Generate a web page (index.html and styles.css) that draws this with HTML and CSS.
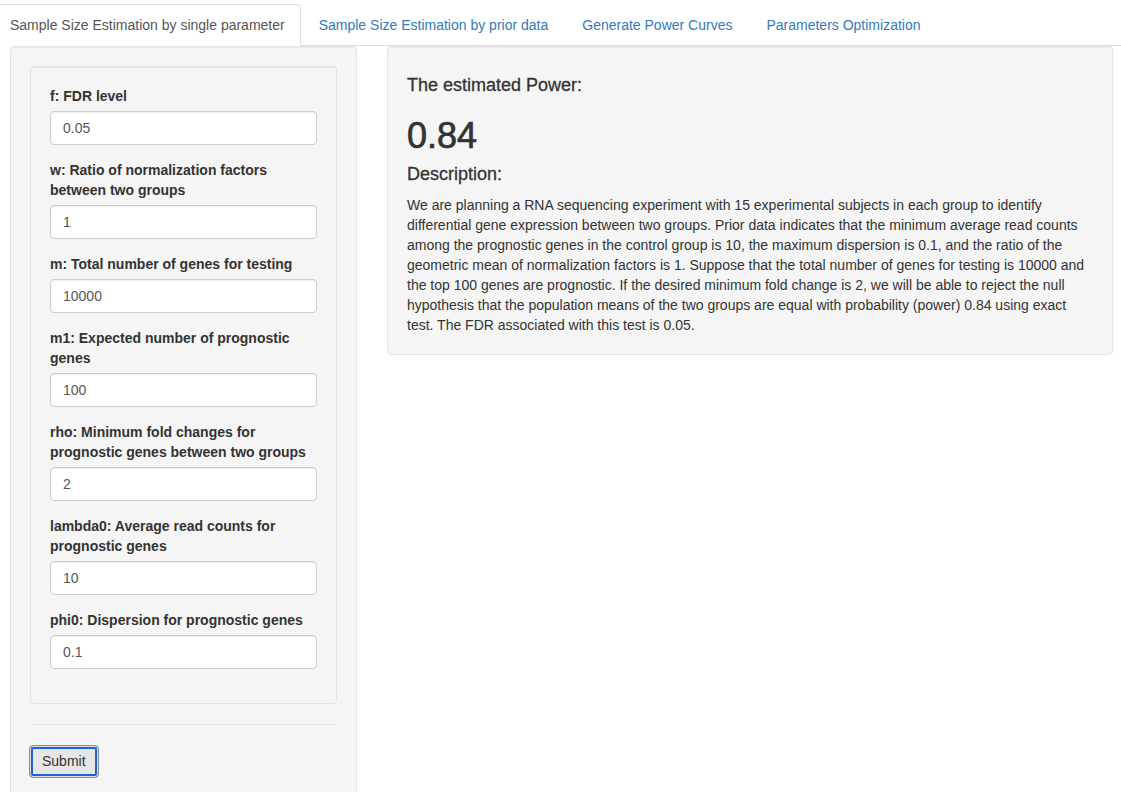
FILE: index.html
```html
<!DOCTYPE html>
<html lang="en">
<head>
<meta charset="utf-8">
<title>Sample Size Estimation</title>
<link rel="stylesheet" href="styles.css">
</head>
<body>
<ul class="nav-tabs">
  <li class="tab active"><a href="#">Sample Size Estimation by single parameter</a></li>
  <li class="tab"><a href="#">Sample Size Estimation by prior data</a></li>
  <li class="tab"><a href="#">Generate Power Curves</a></li>
  <li class="tab"><a href="#">Parameters Optimization</a></li>
</ul>
<div class="row">
  <div class="sidebar">
    <div class="well outer">
      <div class="well inner">
        <div class="form-group">
          <label class="ctl-label">f: FDR level</label>
          <input class="form-control" type="text" value="0.05">
        </div>
        <div class="form-group">
          <label class="ctl-label">w: Ratio of normalization factors between two groups</label>
          <input class="form-control" type="text" value="1">
        </div>
        <div class="form-group">
          <label class="ctl-label">m: Total number of genes for testing</label>
          <input class="form-control" type="text" value="10000">
        </div>
        <div class="form-group">
          <label class="ctl-label">m1: Expected number of prognostic genes</label>
          <input class="form-control" type="text" value="100">
        </div>
        <div class="form-group">
          <label class="ctl-label">rho: Minimum fold changes for prognostic genes between two groups</label>
          <input class="form-control" type="text" value="2">
        </div>
        <div class="form-group">
          <label class="ctl-label">lambda0: Average read counts for prognostic genes</label>
          <input class="form-control" type="text" value="10">
        </div>
        <div class="form-group">
          <label class="ctl-label">phi0: Dispersion for prognostic genes</label>
          <input class="form-control" type="text" value="0.1">
        </div>
      </div>
      <hr class="divider">
      <button class="btn-submit" type="button">Submit</button>
    </div>
  </div>
  <div class="main">
    <div class="well result">
      <h4 class="title">The estimated Power:</h4>
      <h1 class="value">0.84</h1>
      <h4 class="title">Description:</h4>
      <div class="desc">We are planning a RNA sequencing experiment with 15 experimental subjects in each group to identify<br>differential gene expression between two groups. Prior data indicates that the minimum average read counts<br>among the prognostic genes in the control group is 10, the maximum dispersion is 0.1, and the ratio of the<br>geometric mean of normalization factors is 1. Suppose that the total number of genes for testing is 10000 and<br>the top 100 genes are prognostic. If the desired minimum fold change is 2, we will be able to reject the null<br>hypothesis that the population means of the two groups are equal with probability (power) 0.84 using exact<br>test. The FDR associated with this test is 0.05.</div>
    </div>
  </div>
</div>
</body>
</html>
```

FILE: styles.css
```css
* { box-sizing: border-box; }
html, body {
  margin: 0;
  padding: 0;
  background: #fff;
  font-family: "Liberation Sans", Arial, Helvetica, sans-serif;
  font-size: 14px;
  line-height: 20px;
  color: #333;
  overflow: hidden;
}
.nav-tabs {
  list-style: none;
  margin: 4px 0 0 -6px;
  padding: 0;
  display: flex;
  border-bottom: 1px solid #ddd;
}
.tab {
  margin-bottom: -1px;
}
.tab a {
  display: block;
  padding: 10px 15px;
  margin-right: 2px;
  line-height: 20px;
  border: 1px solid transparent;
  border-radius: 4px 4px 0 0;
  color: #337ab7;
  text-decoration: none;
  white-space: nowrap;
}
.tab.active a {
  color: #555;
  background: #fff;
  border-color: #ddd #ddd transparent #ddd;
}
.row {
  display: flex;
  align-items: flex-start;
  gap: 30px;
  padding: 0 8px 0 10px;
}
.sidebar {
  width: 347px;
  flex: none;
}
.main {
  flex: 1;
  min-width: 0;
}
.well {
  background: #f5f5f5;
  border: 1px solid #e3e3e3;
  border-radius: 4px;
  box-shadow: inset 0 1px 1px rgba(0,0,0,0.05);
  padding: 19px;
}
.outer {
  min-height: 780px;
}
.inner {
  margin-bottom: 20px;
}
.form-group {
  margin-bottom: 15px;
}
.ctl-label {
  display: block;
  font-weight: bold;
  margin-bottom: 5px;
  max-width: 100%;
}
.form-control {
  display: block;
  width: 100%;
  height: 34px;
  padding: 6px 12px;
  font-family: inherit;
  font-size: 14px;
  line-height: 20px;
  color: #555;
  background: #fff;
  border: 1px solid #ccc;
  border-radius: 4px;
  box-shadow: inset 0 1px 1px rgba(0,0,0,0.075);
  margin: 0;
}
.divider {
  margin: 20px 0;
  border: 0;
  border-top: 1px solid #e8e8e8;
}
.btn-submit {
  display: inline-block;
  height: 33px;
  padding: 6px 12px;
  font-family: inherit;
  font-size: 14px;
  line-height: 19px;
  color: #333;
  background: #e6e6e6;
  border: 1px solid #8e8e8e;
  border-radius: 4px;
  box-shadow: inset 0 0 0 1px #dcdcdc, inset 0 0 0 3px #1f63d3;
  margin: 0 0 0 -1px;
}
.result {
  padding-bottom: 19px;
}
.title {
  font-size: 18px;
  font-weight: 500;
  line-height: 19.8px;
  margin: 10px 0;
  color: #333;
  -webkit-text-stroke: 0.3px #333;
}
.value {
  font-size: 36px;
  font-weight: 500;
  line-height: 39.6px;
  margin: 20px 0 10px;
  color: #333;
  -webkit-text-stroke: 0.7px #333;
}
.desc {
  white-space: nowrap;
  line-height: 20px;
}
```
